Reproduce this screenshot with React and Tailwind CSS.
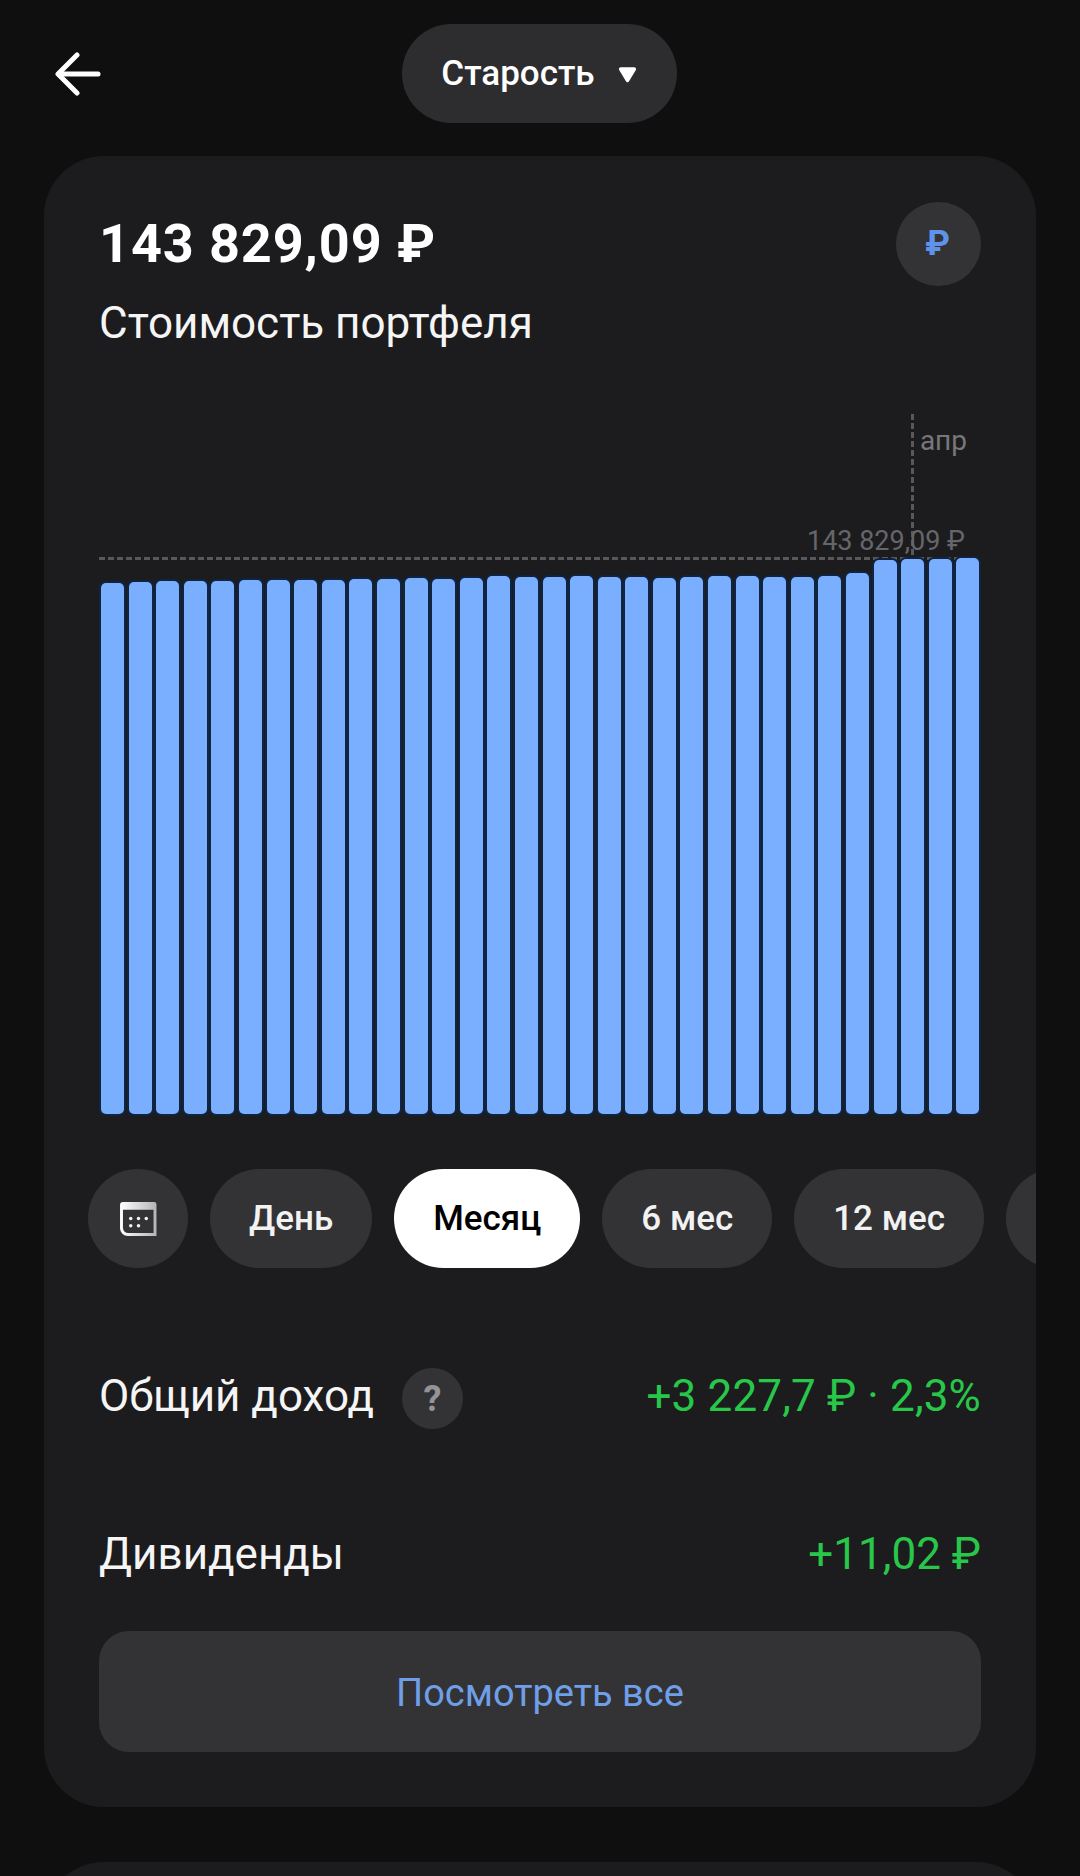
import React from "react";

const barTops = [583, 582, 581, 581, 581, 580, 580, 580, 580, 579, 579, 578, 579, 578, 576, 577, 577, 576, 577, 577, 578, 577, 576, 576, 577, 577, 576, 573, 560, 559, 559, 558];

function BackArrow() {
  return (
    <svg width="46" height="44" viewBox="0 0 46 44" fill="none" stroke="#ffffff" strokeWidth="5" strokeLinecap="round" strokeLinejoin="round">
      <path d="M43 22H4" />
      <path d="M22 3 3 22 22 41" />
    </svg>
  );
}

function CalendarIcon() {
  return (
    <svg width="37" height="34" viewBox="0 0 38 35">
      <defs>
        <linearGradient id="calTop" x1="0" y1="0" x2="1" y2="0">
          <stop offset="0" stopColor="#ffffff" />
          <stop offset="1" stopColor="#b5b5b7" />
        </linearGradient>
      </defs>
      <path d="M3 0H35a2.500 2.500 0 0 1 2.500 2.500V35H8a8 8 0 0 1-8-8V3a3 3 0 0 1 3-3Z" fill="url(#calTop)" />
      <path d="M3 8H34.500V32H8.500A5.500 5.500 0 0 1 3 26.500Z" fill="#333335" />
      <g fill="#f2f2f2">
        <circle cx="11" cy="17" r="1.800" />
        <circle cx="19" cy="17" r="1.800" />
        <circle cx="27" cy="17" r="1.800" />
        <circle cx="11" cy="24.500" r="1.800" />
        <circle cx="19" cy="24.500" r="1.800" />
      </g>
    </svg>
  );
}

function Chart() {
  return (
    <div className="relative mt-[55px] h-[700px] w-[882px]">
      <div className="absolute left-0 right-0 top-[143px] h-[3px] bg-[repeating-linear-gradient(90deg,#58585c_0_6px,transparent_6px_9px)]" />
      <div className="absolute left-[812px] top-0 h-[145px] w-[3px] bg-[repeating-linear-gradient(180deg,#58585c_0_6px,transparent_6px_9px)]" />
      <span className="absolute right-[14px] top-[11px] text-[28px] leading-[32px] text-[#77777b]">апр</span>
      <span className="absolute right-[16px] top-[111px] text-[27px] leading-[32px] text-[#66666a]">143 829,09 ₽</span>
      <div className="absolute bottom-0 left-[2px] flex items-end gap-[4.600px]">
        {barTops.map((top, i) => (
          <div
            key={i}
            className="w-[23px] rounded-[5px] bg-[#7aaeff] shadow-[0_0_0_2px_#10233f]"
            style={{ height: 1114 - top }}
          />
        ))}
      </div>
    </div>
  );
}

function Pill({ active, children }) {
  return (
    <div
      className={`flex h-[99px] shrink-0 items-center justify-center rounded-full px-[39px] pt-[2px] text-[35px] font-medium ${
        active ? "bg-white text-black" : "bg-[#333335] text-[#f2f2f2]"
      }`}
    >
      {children}
    </div>
  );
}

export default function App() {
  return (
    <div className="h-[1876px] overflow-hidden bg-[#0f0f10] font-['Roboto',sans-serif] text-white">
      <header className="grid grid-cols-[1fr_auto_1fr] items-center pt-[24px]">
        <div className="pl-[55px]">
          <BackArrow />
        </div>
        <div className="-ml-[2px] flex h-[99px] w-[275px] items-center justify-center gap-[23px] rounded-full bg-[#2d2d2f] pt-[2px] text-[35px] font-medium">
          <span>Старость</span>
          <svg width="19" height="16" viewBox="0 0 21 17">
            <path d="M3 2H18L10.500 14.500Z" fill="#ffffff" stroke="#ffffff" strokeWidth="4" strokeLinejoin="round" />
          </svg>
        </div>
        <div />
      </header>

      <section className="mx-[44px] mt-[33px] overflow-hidden rounded-[60px] bg-[#1c1c1e] px-[55px] pt-[46px] pb-[55px]">
        <div className="flex h-[84px] items-center justify-between">
          <h1 className="pb-[2px] text-[54px] font-bold tracking-[0.9px]">143 829,09 ₽</h1>
          <div className="flex h-[84px] w-[85px] items-center justify-center rounded-full bg-[#333335] pr-[2px] text-[35px] font-bold text-[#5f93ea]">₽</div>
        </div>
        <p className="pt-[1px] text-[44px] leading-[72px] text-[#f5f5f5]">Стоимость портфеля</p>

        <Chart />

        <div className="-mx-[55px] mt-[55px] flex gap-[22px] px-[44px]">
          <div className="flex h-[99px] w-[100px] shrink-0 items-center justify-center rounded-full bg-[#333335]">
            <CalendarIcon />
          </div>
          <Pill>День</Pill>
          <Pill active>Месяц</Pill>
          <Pill>6 мес</Pill>
          <Pill>12 мес</Pill>
          <div className="h-[99px] w-[120px] shrink-0 rounded-full bg-[#333335]" />
        </div>

        <div className="mt-[100px] flex h-[61px] items-center justify-between text-[44px]">
          <div className="flex items-center gap-[28px]">
            <span className="pb-[5px] text-[#f5f5f5]">Общий доход</span>
            <div className="flex h-[61px] w-[61px] items-center justify-center rounded-full bg-[#333335] text-[36px] font-bold text-[#939398]">?</div>
          </div>
          <span className="pb-[5px] tracking-[0.15px] text-[#28c74a]">+3 227,7 ₽ · 2,3%</span>
        </div>

        <div className="mt-[94px] flex h-[61px] items-center justify-between text-[44px]">
          <span className="text-[#f5f5f5]">Дивиденды</span>
          <span className="text-[#28c74a]">+11,02 ₽</span>
        </div>

        <button className="mt-[47px] flex h-[121px] w-full items-center justify-center rounded-[30px] bg-[#333335] pt-[4px] text-[38px] text-[#6f9fe8]">
          Посмотреть все
        </button>
      </section>

      <section className="mx-[44px] mt-[55px] h-[60px] rounded-t-[60px] bg-[#1c1c1e]" />
    </div>
  );
}
